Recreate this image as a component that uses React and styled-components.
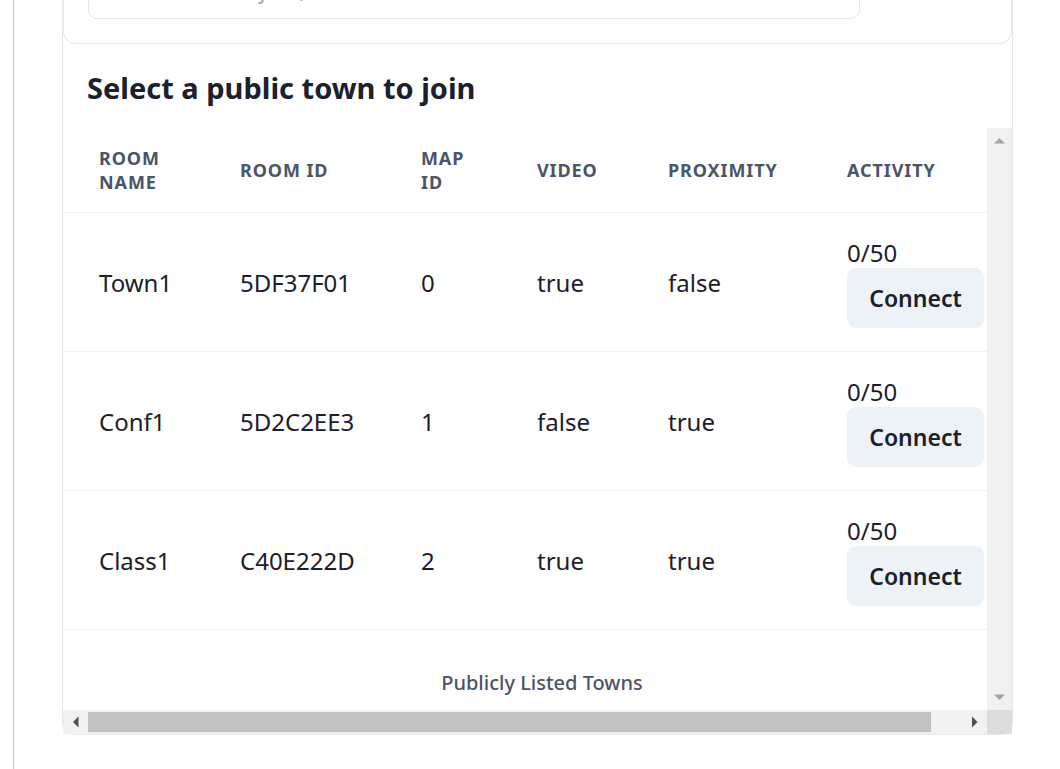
import React from "react";
import styled, { createGlobalStyle } from "styled-components";

const GlobalStyle = createGlobalStyle`
  * { box-sizing: border-box; }
  html, body {
    margin: 0;
    padding: 0;
    background: #fff;
  }
  body {
    font-family: "Noto Sans", "Open Sans", sans-serif;
    color: #1a202c;
    overflow: hidden;
  }
`;

const TABLE_WIDTH = 958;
const VIEW_WIDTH = 924;

const Page = styled.div`
  display: flex;
  flex-direction: column;
  min-height: 100vh;
  margin-left: 13px;
  border-left: 1px solid #cbcbcb;
  padding: 0 47px 0 48px;
`;

const Panel = styled.div`
  margin-top: -115px;
  border: 1px solid #e2e8f0;
  border-radius: 12px;
`;

const JoinCard = styled.div`
  display: flex;
  align-items: flex-start;
  padding: 24px;
  border: 1px solid #e2e8f0;
  border-radius: 12px;
`;

const Field = styled.div`
  flex: 1;
  display: flex;
  flex-direction: column;
`;

const Label = styled.label`
  font-size: 24px;
  font-weight: 500;
  line-height: 36px;
  margin-bottom: 12px;
`;

const TextInput = styled.input`
  height: 60px;
  padding: 0 24px;
  border: 1px solid #e2e8f0;
  border-radius: 9px;
  font-family: inherit;
  font-size: 23px;
  color: #1a202c;
  outline: none;

  &::placeholder {
    color: #a0aec0;
  }
`;

const Button = styled.button`
  display: inline-flex;
  align-items: center;
  justify-content: center;
  width: ${(p) => p.$width || 137}px;
  height: 60px;
  padding: 0;
  border: none;
  border-radius: 9px;
  background: #edf2f7;
  color: #1a202c;
  font-family: inherit;
  font-size: 23px;
  font-weight: 600;
  cursor: pointer;
`;

const Section = styled.div`
  padding: 26px 24px 22px;
`;

const Heading = styled.h2`
  margin: 0;
  font-size: 29px;
  font-weight: 700;
  line-height: 36px;
  color: #1a202c;
`;

/* table with its scrollbars */
const TableFrame = styled.div`
  display: grid;
  grid-template-columns: 1fr 25px;
  grid-template-rows: auto 24px;
`;

const Viewport = styled.div`
  overflow: hidden;
  max-height: 750px;
`;

const VScrollbar = styled.div`
  display: flex;
  flex-direction: column;
  justify-content: space-between;
  background: #f1f1f1;
`;

const HScrollbar = styled.div`
  display: flex;
  background: #f1f1f1;
`;

const ScrollButton = styled.div`
  flex: none;
  display: flex;
  align-items: center;
  justify-content: center;
  width: 25px;
  height: ${(p) => p.$h}px;
`;

const Track = styled.div`
  flex: 1;
  display: flex;
  padding: 2px 0;
`;

const Thumb = styled.div`
  height: 100%;
  background: #c1c1c1;
`;

const Corner = styled.div`
  background: #dcdcdc;
`;

const Table = styled.table`
  width: ${TABLE_WIDTH}px;
  table-layout: fixed;
  border-collapse: collapse;
  font-variant-numeric: lining-nums tabular-nums;
`;

const Col = styled.col`
  width: ${(p) => p.$w}px;
`;

const Th = styled.th`
  padding: 18px 36px;
  text-align: left;
  font-size: 18px;
  font-weight: 700;
  line-height: 24px;
  letter-spacing: 0.05em;
  text-transform: uppercase;
  color: #4a5568;
  border-bottom: 1px solid #edf2f7;
`;

const Td = styled.td`
  padding: 25px 36px 23px;
  font-size: 24px;
  line-height: 30px;
  color: #1a202c;
  border-bottom: 1px solid #edf2f7;
`;

const Count = styled.div`
  line-height: 30px;
`;

const Caption = styled.caption`
  caption-side: bottom;
  margin-top: 24px;
  padding: 13px 36px 11px;
  text-align: center;
  font-size: 20px;
  font-weight: 500;
  line-height: 31.5px;
  color: #4a5568;
`;

const arrowPaths = {
  left: "M10 12L15.5 6.5V17.5Z",
  right: "M10 6.5L15.5 12L10 17.5Z",
  up: "M7 15.5L12.5 10L18 15.5Z",
  down: "M7 9.5L12.5 15L18 9.5Z",
};

function Arrow({ dir, color, h }) {
  return (
    <svg width="25" height={h} viewBox={`0 0 25 ${h}`}>
      <path d={arrowPaths[dir]} fill={color} />
    </svg>
  );
}

const columns = [
  { label: "Room Name", w: 141 },
  { label: "Room ID", w: 181 },
  { label: "Map ID", w: 116 },
  { label: "Video", w: 131 },
  { label: "Proximity", w: 179 },
  { label: "Activity", w: 210 },
];

const towns = [
  { name: "Town1", id: "5DF37F01", map: 0, video: "true", proximity: "false", occupancy: 0, capacity: 50 },
  { name: "Conf1", id: "5D2C2EE3", map: 1, video: "false", proximity: "true", occupancy: 0, capacity: 50 },
  { name: "Class1", id: "C40E222D", map: 2, video: "true", proximity: "true", occupancy: 0, capacity: 50 },
];

export default function App() {
  const thumbRatio = VIEW_WIDTH / TABLE_WIDTH;

  return (
    <>
      <GlobalStyle />
      <Page>
        <Panel>
          <JoinCard>
            <Field>
              <Label htmlFor="townIDToJoin">Town ID</Label>
              <TextInput
                id="townIDToJoin"
                placeholder="ID of town to join, or select from list"
              />
            </Field>
            <Button $width={127}>Connect</Button>
          </JoinCard>

          <Section>
            <Heading>Select a public town to join</Heading>
          </Section>

          <TableFrame>
            <Viewport>
              <Table>
                <colgroup>
                  {columns.map((c) => (
                    <Col key={c.label} $w={c.w} />
                  ))}
                </colgroup>
                <thead>
                  <tr>
                    {columns.map((c) => (
                      <Th key={c.label}>{c.label}</Th>
                    ))}
                  </tr>
                </thead>
                <tbody>
                  {towns.map((t) => (
                    <tr key={t.id}>
                      <Td>{t.name}</Td>
                      <Td>{t.id}</Td>
                      <Td>{t.map}</Td>
                      <Td>{t.video}</Td>
                      <Td>{t.proximity}</Td>
                      <Td>
                        <Count>
                          {t.occupancy}/{t.capacity}
                        </Count>
                        <Button>Connect</Button>
                      </Td>
                    </tr>
                  ))}
                </tbody>
                <Caption>Publicly Listed Towns</Caption>
              </Table>
            </Viewport>

            <VScrollbar>
              <ScrollButton $h={25}>
                <Arrow dir="up" color="#a3a3a3" h={25} />
              </ScrollButton>
              <ScrollButton $h={25}>
                <Arrow dir="down" color="#a3a3a3" h={25} />
              </ScrollButton>
            </VScrollbar>

            <HScrollbar>
              <ScrollButton $h={24}>
                <Arrow dir="left" color="#505050" h={24} />
              </ScrollButton>
              <Track>
                <Thumb style={{ width: `${thumbRatio * 100}%` }} />
              </Track>
              <ScrollButton $h={24}>
                <Arrow dir="right" color="#505050" h={24} />
              </ScrollButton>
            </HScrollbar>

            <Corner />
          </TableFrame>
        </Panel>
      </Page>
    </>
  );
}
